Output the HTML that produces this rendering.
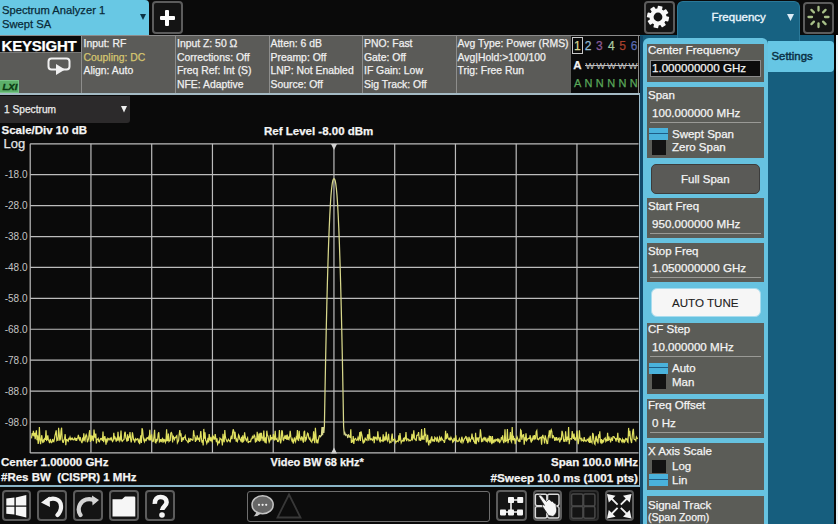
<!DOCTYPE html>
<html><head><meta charset="utf-8">
<style>
*{margin:0;padding:0;box-sizing:border-box}
html,body{width:838px;height:524px;overflow:hidden;background:#0a0a0a}
body{position:relative;font-family:"Liberation Sans",sans-serif;color:#fff;-webkit-text-stroke:0.25px currentColor}
.a{position:absolute;white-space:nowrap}
.btn{position:absolute;background:#141414;border:2px solid #5c5c5c;border-radius:4px}
.ann{font-size:10.4px;color:#f0f0f0;line-height:13.6px}
.sk{position:absolute;left:647px;width:117px;background:#5b5c57}
.skl{position:absolute;left:1px;font-size:11.5px;color:#f4f4f4}
.skv{position:absolute;left:5px;font-size:11.6px;color:#f4f4f4}
.ul{position:absolute;left:3px;right:3px;height:1px;background:#9a9a96}
.tg{position:absolute;left:2px;width:19px}
</style></head><body>

<!-- top tab -->
<div class="a" style="left:0;top:0;width:148.5px;height:35px;background:#68c8e4;border-top-right-radius:4px"></div>
<div class="a" style="left:2px;top:3px;font-size:11.2px;line-height:14.2px;color:#082a38">Spectrum Analyzer 1<br>Swept SA</div>
<svg class="a" style="left:140px;top:14px" width="7" height="7"><path d="M0,0 L6,0 L3,6Z" fill="#0c3344"/></svg>

<!-- plus button -->
<div class="btn" style="left:152px;top:1px;width:31px;height:33px"></div>
<div class="a" style="left:159.5px;top:15.5px;width:15px;height:4px;background:#fff;border-radius:1px"></div>
<div class="a" style="left:165px;top:9.5px;width:4px;height:16px;background:#fff;border-radius:1px"></div>

<!-- gear button -->
<div class="btn" style="left:643.5px;top:1px;width:31px;height:33px"></div>
<svg class="a" style="left:645px;top:3.5px" width="26" height="26" viewBox="-13 -13 26 26">
<g fill="#f8f8f8" transform="rotate(12)">
<circle r="8.4"/>
<rect x="-2.4" y="-11" width="4.8" height="22" rx="0.6"/>
<rect x="-2.4" y="-11" width="4.8" height="22" rx="0.6" transform="rotate(45)"/>
<rect x="-2.4" y="-11" width="4.8" height="22" rx="0.6" transform="rotate(90)"/>
<rect x="-2.4" y="-11" width="4.8" height="22" rx="0.6" transform="rotate(135)"/>
</g>
<circle r="4.4" fill="#121212"/>
</svg>

<!-- right teal panel -->
<div class="a" style="left:640px;top:35px;width:194px;height:489px;background:#165e7e"></div>
<div class="a" style="left:677px;top:1px;width:123px;height:40px;background:#176282;border:1px solid #2a7898;border-bottom:0;border-radius:6px 6px 0 0"></div>
<div class="a" style="left:711.5px;top:11px;font-size:11.5px;color:#e8f4fc;-webkit-text-stroke:0.35px #e8f4fc">Frequency</div>
<svg class="a" style="left:787px;top:14px" width="8" height="8"><path d="M0,0 L7,0 L3.5,7Z" fill="#dcecf6"/></svg>
<div class="a" style="left:834px;top:0;width:2px;height:524px;background:#050505"></div>
<div class="a" style="left:836px;top:35px;width:2px;height:489px;background:#e8f4f8"></div>

<!-- spinner -->
<div class="btn" style="left:803px;top:1.5px;width:30.5px;height:32px"></div>
<svg class="a" style="left:806px;top:4.5px" width="25" height="25" viewBox="-12.5 -12 25 25">
<g stroke="#a8c088" stroke-width="2.3" stroke-linecap="round">
<line x1="0" y1="-6.5" x2="0" y2="-10"/>
<line x1="0" y1="-6.5" x2="0" y2="-10" transform="rotate(45)"/>
<line x1="0" y1="-6.5" x2="0" y2="-10" transform="rotate(90)"/>
<line x1="0" y1="-6.5" x2="0" y2="-10" transform="rotate(135)"/>
<line x1="0" y1="-6.5" x2="0" y2="-10" transform="rotate(180)"/>
<line x1="0" y1="-6.5" x2="0" y2="-10" transform="rotate(225)"/>
<line x1="0" y1="-6.5" x2="0" y2="-10" transform="rotate(270)"/>
<line x1="0" y1="-6.5" x2="0" y2="-10" transform="rotate(315)"/>
</g></svg>

<!-- annotation bar -->
<div class="a" style="left:0;top:35px;width:640px;height:1px;background:#8c8c8c"></div>
<div class="a" style="left:0;top:36px;width:571px;height:57px;background:#5b5b58"></div>
<div class="a" style="left:0;top:36px;width:81px;height:16px;background:#0a0a0a"></div>
<div class="a" style="left:1.5px;top:37px;font-size:15px;font-weight:bold;color:#fff;line-height:17px;letter-spacing:-0.2px">KEYSIGHT</div>
<div class="a" style="left:0;top:52px;width:81px;height:1px;background:#7a7a78"></div>
<svg class="a" style="left:46px;top:56px" width="28" height="20" viewBox="0 0 28 20">
<rect x="2.5" y="2.5" width="21" height="11" rx="3" fill="none" stroke="#f0f0f0" stroke-width="2"/>
<path d="M10,8 L19,13.5 L10,19Z" fill="#f0f0f0"/>
</svg>
<div class="a" style="left:0;top:80px;width:18.5px;height:12.8px;background:#5cb06a;border:1px solid #78c488;border-left:0"></div>
<div class="a" style="left:2.5px;top:80.5px;font-size:9.5px;font-weight:bold;font-style:italic;color:#0a3a12;line-height:12px;-webkit-text-stroke:0.4px #0a3a12">LXI</div>
<div class="a" style="left:81px;top:36px;width:1px;height:57px;background:#8e8e8c"></div>
<div class="a" style="left:175px;top:36px;width:1px;height:57px;background:#8e8e8c"></div>
<div class="a" style="left:269px;top:36px;width:1px;height:57px;background:#8e8e8c"></div>
<div class="a" style="left:362px;top:36px;width:1px;height:57px;background:#8e8e8c"></div>
<div class="a" style="left:456px;top:36px;width:1px;height:57px;background:#8e8e8c"></div>
<div class="a ann" style="left:83.5px;top:37px">Input: RF<br><span style="color:#d6c670">Coupling: DC</span><br>Align: Auto</div>
<div class="a ann" style="left:177px;top:37px">Input Z: 50 &#937;<br>Corrections: Off<br>Freq Ref: Int (S)<br>NFE: Adaptive</div>
<div class="a ann" style="left:270.5px;top:37px">Atten: 6 dB<br>Preamp: Off<br>LNP: Not Enabled<br>Source: Off</div>
<div class="a ann" style="left:364px;top:37px">PNO: Fast<br>Gate: Off<br>IF Gain: Low<br>Sig Track: Off</div>
<div class="a ann" style="left:457.5px;top:37px">Avg Type: Power (RMS)<br>Avg|Hold:&gt;100/100<br>Trig: Free Run</div>
<!-- trace indicator box -->
<div class="a" style="left:571px;top:36px;width:68px;height:57px;background:#0a0a0a;border-right:1px solid #8a8a8a"></div>
<div class="a" style="left:572px;top:37px;width:11px;height:17px;border:1px solid #c8c8c8"></div>
<div class="a" style="left:571.4px;top:38.5px;width:12px;text-align:center;font-size:12px;line-height:15px;color:#dcd890">1</div>
<div class="a" style="left:582.0px;top:38.5px;width:12px;text-align:center;font-size:12px;line-height:15px;color:#94bcd4">2</div>
<div class="a" style="left:593.4px;top:38.5px;width:12px;text-align:center;font-size:12px;line-height:15px;color:#8a5a98">3</div>
<div class="a" style="left:605.4px;top:38.5px;width:12px;text-align:center;font-size:12px;line-height:15px;color:#aacca4">4</div>
<div class="a" style="left:616.7px;top:38.5px;width:12px;text-align:center;font-size:12px;line-height:15px;color:#a8402c">5</div>
<div class="a" style="left:628.1px;top:38.5px;width:12px;text-align:center;font-size:12px;line-height:15px;color:#5a6ab0">6</div>
<div class="a" style="left:569.5px;top:58px;width:16px;text-align:center;font-size:11.5px;font-weight:bold;line-height:15px;color:#f0f0f0">A</div>
<div class="a" style="left:584.0px;top:58.5px;width:12px;text-align:center;font-size:9.5px;line-height:14px;color:#c4c4c4;-webkit-text-stroke:0">W</div>
<div class="a" style="left:594.8px;top:58.5px;width:12px;text-align:center;font-size:9.5px;line-height:14px;color:#c4c4c4;-webkit-text-stroke:0">W</div>
<div class="a" style="left:605.5px;top:58.5px;width:12px;text-align:center;font-size:9.5px;line-height:14px;color:#c4c4c4;-webkit-text-stroke:0">W</div>
<div class="a" style="left:616.2px;top:58.5px;width:12px;text-align:center;font-size:9.5px;line-height:14px;color:#c4c4c4;-webkit-text-stroke:0">W</div>
<div class="a" style="left:627.0px;top:58.5px;width:12px;text-align:center;font-size:9.5px;line-height:14px;color:#c4c4c4;-webkit-text-stroke:0">W</div>
<div class="a" style="left:585px;top:64.5px;width:53px;height:1px;background:#c0c0c0"></div>
<div class="a" style="left:571.7px;top:76px;width:12px;text-align:center;font-size:11px;line-height:15px;color:#5aa85a">A</div>
<div class="a" style="left:582.4px;top:76px;width:12px;text-align:center;font-size:11px;line-height:15px;color:#5aa85a">N</div>
<div class="a" style="left:593.8px;top:76px;width:12px;text-align:center;font-size:11px;line-height:15px;color:#5aa85a">N</div>
<div class="a" style="left:605.2px;top:76px;width:12px;text-align:center;font-size:11px;line-height:15px;color:#5aa85a">N</div>
<div class="a" style="left:616.5px;top:76px;width:12px;text-align:center;font-size:11px;line-height:15px;color:#5aa85a">N</div>
<div class="a" style="left:627.8px;top:76px;width:12px;text-align:center;font-size:11px;line-height:15px;color:#5aa85a">N</div>
<div class="a" style="left:0;top:93px;width:640px;height:2px;background:#a4bac4"></div>

<!-- spectrum dropdown -->
<div class="a" style="left:0;top:96px;width:129.5px;height:26.5px;background:#2c2a2b;border-bottom-right-radius:3px"></div>
<div class="a" style="left:4px;top:103.5px;font-size:10.2px;color:#ececec">1 Spectrum</div>
<svg class="a" style="left:121px;top:106px" width="7" height="8"><path d="M0,0 L6,0 L3,6.5Z" fill="#f0f0f0"/></svg>

<div class="a" style="left:1.5px;top:124.2px;font-size:11.5px;font-weight:bold;color:#f4f4f4">Scale/Div 10 dB</div>
<div class="a" style="left:3.5px;top:136px;font-size:13px;color:#e4e4e4">Log</div>
<div class="a" style="left:264px;top:124.7px;font-size:11.5px;font-weight:bold;color:#f4f4f4">Ref Level -8.00 dBm</div>

<!-- grid -->
<svg class="a" style="left:0;top:0" width="838" height="524">
<g stroke="#bcbcbc" stroke-width="1.2" fill="none">
<path d="M30.20,143.8 V452.9 M90.95,143.8 V452.9 M151.70,143.8 V452.9 M212.45,143.8 V452.9 M273.20,143.8 V452.9 M333.95,143.8 V452.9 M394.70,143.8 V452.9 M455.45,143.8 V452.9 M516.20,143.8 V452.9 M576.95,143.8 V452.9"/>
<path d="M30.2,143.80 H638.5 M30.2,174.71 H638.5 M30.2,205.62 H638.5 M30.2,236.53 H638.5 M30.2,267.44 H638.5 M30.2,298.35 H638.5 M30.2,329.26 H638.5 M30.2,360.17 H638.5 M30.2,391.08 H638.5 M30.2,421.99 H638.5 M30.2,452.90 H638.5"/></g>
<path d="M331,144 L337,144 L334,150Z" fill="#d0d0d0"/>
<path d="M331,453.4 L337,453.4 L334,447.4Z" fill="#d0d0d0"/>
<path d="M31.0,437.6 L31.6,437.7 L32.2,433.0 L32.8,435.5 L33.4,430.7 L34.0,436.5 L34.6,432.8 L35.2,439.3 L35.8,433.6 L36.4,430.4 L37.0,440.1 L37.6,435.4 L38.2,444.0 L38.8,439.6 L39.4,427.0 L40.0,439.3 L40.6,444.1 L41.2,439.1 L41.8,435.2 L42.4,441.0 L43.0,443.0 L43.6,440.1 L44.2,441.0 L44.8,437.9 L45.4,439.8 L46.0,430.3 L46.6,440.2 L47.2,439.7 L47.8,435.3 L48.4,439.9 L49.0,441.1 L49.6,443.2 L50.2,439.0 L50.8,441.6 L51.4,442.6 L52.0,442.1 L52.6,439.0 L53.2,441.1 L53.8,441.6 L54.4,439.1 L55.0,435.7 L55.6,433.1 L56.2,430.3 L56.8,440.0 L57.4,438.8 L58.0,440.8 L58.6,427.7 L59.2,433.6 L59.8,440.6 L60.4,439.1 L61.0,431.1 L61.6,427.7 L62.2,439.4 L62.8,442.1 L63.4,442.2 L64.0,439.7 L64.6,438.4 L65.2,434.2 L65.8,445.1 L66.4,439.6 L67.0,439.5 L67.6,440.7 L68.2,441.3 L68.8,438.6 L69.4,439.0 L70.0,437.2 L70.6,439.5 L71.2,438.4 L71.8,439.4 L72.4,438.4 L73.0,439.7 L73.6,439.9 L74.2,438.9 L74.8,438.0 L75.4,440.5 L76.0,438.2 L76.6,440.9 L77.2,438.4 L77.8,437.9 L78.4,434.9 L79.0,438.8 L79.6,439.8 L80.2,437.0 L80.8,440.4 L81.4,441.6 L82.0,443.1 L82.6,437.5 L83.2,441.3 L83.8,433.4 L84.4,439.5 L85.0,440.6 L85.6,436.2 L86.2,434.6 L86.8,436.1 L87.4,442.2 L88.0,440.5 L88.6,438.8 L89.2,433.0 L89.8,430.0 L90.4,442.0 L91.0,435.3 L91.6,440.6 L92.2,435.6 L92.8,437.5 L93.4,441.1 L94.0,429.6 L94.6,435.4 L95.2,438.0 L95.8,433.6 L96.4,443.4 L97.0,439.2 L97.6,439.3 L98.2,438.5 L98.8,441.5 L99.4,441.9 L100.0,439.7 L100.6,438.7 L101.2,439.1 L101.8,438.5 L102.4,440.9 L103.0,431.5 L103.6,442.2 L104.2,439.1 L104.8,436.1 L105.4,439.3 L106.0,444.6 L106.6,439.9 L107.2,441.2 L107.8,438.2 L108.4,438.6 L109.0,440.0 L109.6,439.0 L110.2,438.2 L110.8,439.6 L111.4,438.2 L112.0,440.4 L112.6,441.5 L113.2,440.3 L113.8,432.7 L114.4,438.4 L115.0,437.2 L115.6,438.6 L116.2,441.7 L116.8,439.0 L117.4,440.6 L118.0,431.9 L118.6,439.3 L119.2,438.0 L119.8,440.9 L120.4,439.4 L121.0,430.5 L121.6,440.0 L122.2,441.3 L122.8,440.6 L123.4,439.8 L124.0,439.6 L124.6,433.4 L125.2,431.8 L125.8,437.7 L126.4,439.1 L127.0,441.6 L127.6,434.2 L128.2,440.9 L128.8,436.8 L129.4,437.1 L130.0,432.0 L130.6,438.9 L131.2,442.5 L131.8,439.5 L132.4,432.4 L133.0,435.6 L133.6,439.8 L134.2,439.8 L134.8,442.5 L135.4,438.9 L136.0,439.9 L136.6,439.9 L137.2,438.7 L137.8,438.6 L138.4,441.5 L139.0,440.3 L139.6,444.1 L140.2,440.1 L140.8,435.3 L141.4,442.9 L142.0,428.3 L142.6,430.1 L143.2,436.8 L143.8,440.2 L144.4,441.8 L145.0,439.2 L145.6,440.7 L146.2,440.7 L146.8,438.0 L147.4,437.8 L148.0,438.6 L148.6,437.1 L149.2,440.3 L149.8,429.9 L150.4,440.4 L151.0,438.5 L151.6,434.3 L152.2,441.0 L152.8,441.6 L153.4,440.9 L154.0,436.0 L154.6,429.8 L155.2,442.3 L155.8,442.8 L156.4,438.8 L157.0,440.9 L157.6,439.7 L158.2,433.9 L158.8,432.3 L159.4,441.8 L160.0,441.0 L160.6,439.1 L161.2,442.1 L161.8,439.8 L162.4,438.8 L163.0,442.7 L163.6,438.9 L164.2,440.7 L164.8,440.0 L165.4,442.4 L166.0,440.7 L166.6,429.3 L167.2,440.7 L167.8,440.6 L168.4,433.6 L169.0,441.4 L169.6,440.6 L170.2,440.5 L170.8,433.1 L171.4,432.5 L172.0,434.1 L172.6,442.4 L173.2,435.6 L173.8,437.8 L174.4,439.4 L175.0,437.7 L175.6,437.7 L176.2,436.4 L176.8,435.7 L177.4,442.9 L178.0,441.8 L178.6,440.6 L179.2,434.2 L179.8,430.1 L180.4,434.7 L181.0,433.2 L181.6,441.9 L182.2,440.0 L182.8,437.5 L183.4,440.2 L184.0,437.4 L184.6,437.2 L185.2,435.9 L185.8,439.6 L186.4,440.1 L187.0,440.8 L187.6,441.4 L188.2,443.1 L188.8,437.9 L189.4,441.3 L190.0,441.4 L190.6,438.9 L191.2,439.1 L191.8,439.8 L192.4,440.3 L193.0,439.9 L193.6,430.4 L194.2,435.5 L194.8,436.0 L195.4,441.9 L196.0,438.9 L196.6,440.5 L197.2,435.3 L197.8,439.2 L198.4,439.5 L199.0,437.6 L199.6,441.8 L200.2,436.3 L200.8,431.1 L201.4,437.9 L202.0,442.6 L202.6,440.1 L203.2,445.5 L203.8,428.9 L204.4,438.6 L205.0,432.4 L205.6,440.3 L206.2,441.1 L206.8,443.4 L207.4,441.8 L208.0,437.9 L208.6,442.4 L209.2,434.0 L209.8,439.8 L210.4,440.4 L211.0,436.9 L211.6,440.5 L212.2,441.8 L212.8,435.8 L213.4,436.5 L214.0,439.2 L214.6,439.0 L215.2,434.1 L215.8,438.4 L216.4,442.1 L217.0,438.4 L217.6,444.3 L218.2,443.0 L218.8,441.5 L219.4,442.4 L220.0,438.2 L220.6,439.0 L221.2,439.1 L221.8,440.4 L222.4,445.4 L223.0,433.8 L223.6,440.0 L224.2,442.3 L224.8,430.0 L225.4,437.0 L226.0,439.0 L226.6,440.4 L227.2,441.7 L227.8,441.0 L228.4,439.3 L229.0,440.1 L229.6,440.7 L230.2,442.3 L230.8,437.8 L231.4,435.7 L232.0,439.2 L232.6,432.6 L233.2,429.3 L233.8,431.2 L234.4,439.2 L235.0,431.9 L235.6,437.0 L236.2,441.7 L236.8,439.5 L237.4,441.3 L238.0,439.4 L238.6,434.8 L239.2,435.9 L239.8,439.3 L240.4,439.4 L241.0,441.5 L241.6,436.7 L242.2,442.7 L242.8,435.4 L243.4,441.2 L244.0,440.5 L244.6,432.4 L245.2,437.0 L245.8,439.3 L246.4,440.7 L247.0,439.1 L247.6,437.9 L248.2,443.0 L248.8,441.5 L249.4,441.7 L250.0,441.5 L250.6,441.7 L251.2,439.0 L251.8,438.8 L252.4,436.7 L253.0,438.0 L253.6,437.0 L254.2,435.1 L254.8,436.1 L255.4,442.5 L256.0,439.8 L256.6,441.6 L257.2,431.9 L257.8,439.8 L258.4,440.3 L259.0,433.5 L259.6,441.6 L260.2,432.7 L260.8,440.8 L261.4,432.9 L262.0,437.8 L262.6,437.5 L263.2,441.1 L263.8,430.5 L264.4,439.6 L265.0,442.6 L265.6,437.3 L266.2,443.4 L266.8,430.7 L267.4,435.3 L268.0,436.1 L268.6,439.7 L269.2,442.2 L269.8,440.9 L270.4,434.8 L271.0,440.2 L271.6,437.5 L272.2,437.7 L272.8,439.3 L273.4,434.0 L274.0,439.8 L274.6,440.0 L275.2,430.9 L275.8,439.2 L276.4,439.5 L277.0,438.6 L277.6,441.4 L278.2,441.5 L278.8,439.7 L279.4,430.0 L280.0,439.1 L280.6,443.4 L281.2,440.2 L281.8,430.3 L282.4,431.6 L283.0,439.8 L283.6,440.3 L284.2,437.4 L284.8,436.2 L285.4,438.9 L286.0,435.4 L286.6,439.6 L287.2,434.6 L287.8,439.8 L288.4,437.6 L289.0,439.2 L289.6,436.6 L290.2,430.8 L290.8,436.4 L291.4,439.4 L292.0,440.9 L292.6,439.4 L293.2,443.5 L293.8,441.3 L294.4,437.5 L295.0,440.0 L295.6,441.6 L296.2,437.6 L296.8,439.2 L297.4,430.1 L298.0,439.9 L298.6,440.4 L299.2,430.8 L299.8,437.9 L300.4,438.2 L301.0,440.6 L301.6,436.9 L302.2,437.2 L302.8,440.7 L303.4,442.6 L304.0,432.2 L304.6,430.8 L305.2,441.7 L305.8,437.1 L306.4,438.7 L307.0,435.5 L307.6,433.2 L308.2,433.8 L308.8,438.0 L309.4,439.2 L310.0,438.0 L310.6,441.0 L311.2,441.2 L311.8,442.1 L312.4,438.5 L313.0,440.8 L313.6,431.2 L314.2,437.4 L314.8,443.3 L315.4,427.7 L316.0,436.1 L316.6,441.7 L317.2,440.6 L317.8,443.5 L318.4,439.5 L319.0,437.0 L319.6,435.2 M348.4,434.4 L349.0,436.5 L349.6,436.2 L350.2,437.7 L350.8,429.3 L351.4,443.0 L352.0,440.0 L352.6,442.4 L353.2,436.0 L353.8,443.9 L354.4,439.4 L355.0,438.9 L355.6,438.4 L356.2,440.0 L356.8,440.3 L357.4,439.9 L358.0,437.6 L358.6,439.8 L359.2,438.1 L359.8,432.1 L360.4,441.0 L361.0,431.3 L361.6,433.9 L362.2,436.7 L362.8,441.4 L363.4,443.5 L364.0,440.6 L364.6,441.4 L365.2,437.6 L365.8,439.7 L366.4,439.7 L367.0,440.2 L367.6,434.8 L368.2,434.8 L368.8,440.7 L369.4,429.1 L370.0,438.0 L370.6,439.5 L371.2,438.7 L371.8,439.6 L372.4,440.3 L373.0,438.6 L373.6,436.3 L374.2,443.1 L374.8,436.8 L375.4,438.4 L376.0,437.5 L376.6,438.8 L377.2,440.5 L377.8,431.3 L378.4,436.9 L379.0,439.4 L379.6,440.7 L380.2,436.8 L380.8,441.3 L381.4,440.2 L382.0,440.1 L382.6,440.9 L383.2,434.3 L383.8,440.7 L384.4,440.0 L385.0,436.4 L385.6,440.5 L386.2,431.7 L386.8,438.4 L387.4,440.6 L388.0,438.7 L388.6,433.9 L389.2,441.1 L389.8,442.7 L390.4,441.8 L391.0,442.2 L391.6,437.3 L392.2,433.6 L392.8,441.7 L393.4,439.6 L394.0,439.6 L394.6,438.9 L395.2,440.4 L395.8,442.7 L396.4,441.3 L397.0,441.4 L397.6,440.9 L398.2,441.5 L398.8,435.3 L399.4,440.8 L400.0,433.0 L400.6,438.6 L401.2,442.7 L401.8,441.3 L402.4,440.5 L403.0,441.0 L403.6,437.9 L404.2,441.5 L404.8,437.9 L405.4,438.5 L406.0,432.1 L406.6,441.2 L407.2,438.8 L407.8,439.0 L408.4,439.3 L409.0,440.9 L409.6,440.2 L410.2,440.8 L410.8,440.3 L411.4,439.7 L412.0,433.9 L412.6,439.2 L413.2,437.8 L413.8,430.4 L414.4,437.4 L415.0,439.3 L415.6,439.3 L416.2,441.0 L416.8,435.3 L417.4,435.3 L418.0,434.7 L418.6,432.1 L419.2,440.4 L419.8,438.7 L420.4,440.9 L421.0,438.3 L421.6,429.0 L422.2,439.2 L422.8,438.7 L423.4,435.7 L424.0,439.9 L424.6,428.1 L425.2,435.3 L425.8,434.8 L426.4,442.4 L427.0,440.3 L427.6,434.7 L428.2,442.1 L428.8,445.4 L429.4,440.9 L430.0,440.4 L430.6,443.3 L431.2,438.2 L431.8,436.4 L432.4,441.4 L433.0,439.7 L433.6,440.0 L434.2,441.9 L434.8,437.4 L435.4,438.2 L436.0,439.3 L436.6,441.5 L437.2,436.7 L437.8,440.0 L438.4,441.9 L439.0,441.7 L439.6,437.2 L440.2,438.6 L440.8,441.1 L441.4,437.4 L442.0,438.4 L442.6,440.0 L443.2,440.2 L443.8,440.8 L444.4,442.8 L445.0,439.8 L445.6,430.9 L446.2,439.1 L446.8,436.9 L447.4,433.4 L448.0,437.8 L448.6,439.1 L449.2,439.7 L449.8,437.6 L450.4,440.4 L451.0,437.5 L451.6,439.0 L452.2,439.6 L452.8,442.2 L453.4,441.5 L454.0,437.8 L454.6,440.4 L455.2,439.8 L455.8,435.4 L456.4,440.3 L457.0,441.6 L457.6,440.9 L458.2,441.4 L458.8,440.2 L459.4,438.6 L460.0,440.5 L460.6,441.8 L461.2,442.4 L461.8,436.7 L462.4,439.2 L463.0,442.3 L463.6,440.7 L464.2,439.2 L464.8,438.2 L465.4,437.8 L466.0,436.0 L466.6,439.6 L467.2,438.6 L467.8,443.1 L468.4,441.3 L469.0,436.8 L469.6,439.5 L470.2,442.0 L470.8,439.2 L471.4,438.6 L472.0,433.6 L472.6,438.6 L473.2,438.0 L473.8,441.4 L474.4,441.8 L475.0,443.5 L475.6,432.7 L476.2,444.1 L476.8,437.5 L477.4,440.3 L478.0,437.6 L478.6,442.1 L479.2,437.6 L479.8,437.1 L480.4,429.4 L481.0,434.5 L481.6,442.1 L482.2,439.7 L482.8,441.7 L483.4,438.7 L484.0,437.7 L484.6,439.3 L485.2,437.4 L485.8,441.0 L486.4,441.4 L487.0,439.1 L487.6,441.2 L488.2,439.0 L488.8,440.1 L489.4,435.7 L490.0,442.8 L490.6,436.1 L491.2,438.9 L491.8,444.1 L492.4,436.1 L493.0,443.2 L493.6,439.8 L494.2,441.7 L494.8,440.1 L495.4,441.0 L496.0,439.4 L496.6,439.7 L497.2,440.8 L497.8,438.3 L498.4,440.5 L499.0,438.8 L499.6,443.2 L500.2,441.2 L500.8,440.9 L501.4,437.0 L502.0,439.6 L502.6,435.3 L503.2,440.8 L503.8,443.0 L504.4,440.2 L505.0,429.3 L505.6,442.1 L506.2,440.8 L506.8,440.4 L507.4,429.1 L508.0,443.1 L508.6,439.7 L509.2,439.4 L509.8,438.9 L510.4,432.1 L511.0,440.9 L511.6,442.0 L512.2,427.0 L512.8,440.2 L513.4,435.9 L514.0,440.5 L514.6,438.0 L515.2,444.1 L515.8,439.9 L516.4,439.2 L517.0,436.8 L517.6,438.4 L518.2,440.7 L518.8,441.3 L519.4,439.8 L520.0,442.0 L520.6,430.0 L521.2,430.8 L521.8,439.8 L522.4,436.7 L523.0,434.9 L523.6,434.6 L524.2,444.7 L524.8,438.5 L525.4,439.4 L526.0,433.4 L526.6,440.6 L527.2,439.7 L527.8,438.8 L528.4,438.6 L529.0,438.2 L529.6,438.5 L530.2,435.2 L530.8,440.8 L531.4,442.5 L532.0,438.8 L532.6,439.7 L533.2,435.6 L533.8,439.3 L534.4,435.2 L535.0,439.1 L535.6,438.3 L536.2,431.7 L536.8,430.6 L537.4,439.0 L538.0,438.7 L538.6,439.7 L539.2,438.9 L539.8,437.6 L540.4,437.8 L541.0,437.3 L541.6,444.8 L542.2,437.3 L542.8,435.0 L543.4,437.6 L544.0,438.7 L544.6,443.5 L545.2,435.3 L545.8,438.1 L546.4,440.3 L547.0,443.6 L547.6,443.5 L548.2,437.5 L548.8,435.2 L549.4,430.3 L550.0,438.2 L550.6,431.1 L551.2,429.7 L551.8,431.7 L552.4,438.5 L553.0,435.1 L553.6,437.0 L554.2,437.6 L554.8,441.0 L555.4,437.4 L556.0,439.2 L556.6,437.1 L557.2,440.0 L557.8,439.7 L558.4,438.7 L559.0,438.1 L559.6,442.4 L560.2,440.7 L560.8,438.4 L561.4,439.1 L562.0,430.8 L562.6,433.1 L563.2,436.8 L563.8,441.6 L564.4,439.3 L565.0,441.8 L565.6,431.4 L566.2,439.0 L566.8,441.7 L567.4,436.6 L568.0,440.0 L568.6,427.0 L569.2,444.2 L569.8,439.3 L570.4,438.6 L571.0,438.8 L571.6,439.2 L572.2,431.0 L572.8,436.4 L573.4,438.9 L574.0,433.6 L574.6,439.2 L575.2,438.4 L575.8,440.6 L576.4,437.5 L577.0,430.5 L577.6,439.2 L578.2,444.2 L578.8,440.2 L579.4,430.3 L580.0,438.1 L580.6,438.4 L581.2,440.3 L581.8,438.7 L582.4,440.3 L583.0,440.6 L583.6,441.2 L584.2,437.0 L584.8,440.5 L585.4,440.4 L586.0,441.4 L586.6,440.9 L587.2,439.3 L587.8,439.5 L588.4,440.8 L589.0,437.5 L589.6,442.9 L590.2,435.9 L590.8,441.9 L591.4,441.5 L592.0,442.6 L592.6,433.5 L593.2,433.9 L593.8,439.9 L594.4,443.4 L595.0,444.3 L595.6,438.4 L596.2,435.9 L596.8,440.7 L597.4,439.8 L598.0,443.4 L598.6,434.3 L599.2,438.0 L599.8,431.4 L600.4,441.9 L601.0,442.9 L601.6,439.1 L602.2,443.5 L602.8,440.0 L603.4,442.4 L604.0,439.1 L604.6,438.8 L605.2,438.0 L605.8,441.3 L606.4,439.9 L607.0,441.2 L607.6,432.7 L608.2,440.8 L608.8,436.5 L609.4,439.2 L610.0,439.3 L610.6,442.3 L611.2,437.8 L611.8,438.3 L612.4,440.9 L613.0,436.7 L613.6,436.7 L614.2,436.9 L614.8,438.3 L615.4,438.4 L616.0,441.5 L616.6,438.7 L617.2,439.0 L617.8,432.8 L618.4,441.7 L619.0,442.2 L619.6,438.4 L620.2,438.8 L620.8,439.6 L621.4,440.7 L622.0,442.0 L622.6,439.3 L623.2,441.3 L623.8,439.3 L624.4,442.2 L625.0,441.4 L625.6,438.7 L626.2,439.3 L626.8,438.7 L627.4,441.8 L628.0,442.4 L628.6,427.9 L629.2,436.3 L629.8,430.7 L630.4,438.1 L631.0,440.8 L631.6,443.0 L632.2,436.5 L632.8,431.0 L633.4,428.8 L634.0,438.9 L634.6,439.6 L635.2,439.4 L635.8,440.6 L636.4,436.9 L637.0,437.9 L637.6,439.0" fill="none" stroke="#e0e060" stroke-width="1.2"/>
<path d="M319.6,435.2 L320.2,436.8 L320.8,436.1 L321.4,435.6 L322.0,427.0 L322.6,435.1 L323.2,427.0 L323.8,433.0 L324.4,426.1 L325.0,391.8 L325.6,360.3 L326.2,331.7 L326.8,305.8 L327.4,282.6 L328.0,262.0 L328.6,244.0 L329.2,228.4 L329.8,215.2 L330.4,204.2 L331.0,195.4 L331.6,188.7 L332.2,183.8 L332.8,180.7 L333.4,179.1 L334.0,178.7 L334.6,179.1 L335.2,180.7 L335.8,183.8 L336.4,188.7 L337.0,195.4 L337.6,204.2 L338.2,215.2 L338.8,228.4 L339.4,244.0 L340.0,262.0 L340.6,282.6 L341.2,305.8 L341.8,331.7 L342.4,360.3 L343.0,391.8 L343.6,426.1 L344.2,433.7 L344.8,432.8 L345.4,435.1 L346.0,434.4 L346.6,435.1 L347.2,435.6 L347.8,438.0 L348.4,434.4" fill="none" stroke="#d8d88c" stroke-width="1.25"/>
</svg>
<div class="a" style="left:0;top:168px;width:27.5px;font-size:10px;line-height:14px;color:#c4c4c4;text-align:right;-webkit-text-stroke:0">-18.0</div>
<div class="a" style="left:0;top:199px;width:27.5px;font-size:10px;line-height:14px;color:#c4c4c4;text-align:right;-webkit-text-stroke:0">-28.0</div>
<div class="a" style="left:0;top:230px;width:27.5px;font-size:10px;line-height:14px;color:#c4c4c4;text-align:right;-webkit-text-stroke:0">-38.0</div>
<div class="a" style="left:0;top:261px;width:27.5px;font-size:10px;line-height:14px;color:#c4c4c4;text-align:right;-webkit-text-stroke:0">-48.0</div>
<div class="a" style="left:0;top:292px;width:27.5px;font-size:10px;line-height:14px;color:#c4c4c4;text-align:right;-webkit-text-stroke:0">-58.0</div>
<div class="a" style="left:0;top:322.6px;width:27.5px;font-size:10px;line-height:14px;color:#c4c4c4;text-align:right;-webkit-text-stroke:0">-68.0</div>
<div class="a" style="left:0;top:353.6px;width:27.5px;font-size:10px;line-height:14px;color:#c4c4c4;text-align:right;-webkit-text-stroke:0">-78.0</div>
<div class="a" style="left:0;top:384.5px;width:27.5px;font-size:10px;line-height:14px;color:#c4c4c4;text-align:right;-webkit-text-stroke:0">-88.0</div>
<div class="a" style="left:0;top:415.5px;width:27.5px;font-size:10px;line-height:14px;color:#c4c4c4;text-align:right;-webkit-text-stroke:0">-98.0</div>

<!-- bottom text -->
<div class="a" style="left:1px;top:455px;font-size:11.5px;font-weight:bold;color:#f4f4f4;line-height:15.2px">Center 1.00000 GHz<br>#Res BW&nbsp; (CISPR) 1 MHz</div>
<div class="a" style="left:270.5px;top:455.5px;font-size:11px;font-weight:bold;color:#f4f4f4">Video BW 68 kHz*</div>
<div class="a" style="left:400px;width:238px;top:455px;font-size:11.5px;font-weight:bold;color:#f4f4f4;line-height:15.2px;text-align:right">Span 100.0 MHz<br><span style="font-size:11.7px">#Sweep 10.0 ms (1001 pts)</span></div>
<div class="a" style="left:0;top:485px;width:640px;height:2px;background:#8ab4c6"></div>
<div class="a" style="left:638.5px;top:93px;width:1.5px;height:394px;background:#9cbccc"></div>

<!-- bottom toolbar -->
<div class="btn" style="left:1.5px;top:490px;width:29.5px;height:31px"></div>
<svg class="a" style="left:0;top:486px" width="36" height="38" viewBox="0 0 36 38">
<path d="M6.3,12.6 L14.4,11.6 L14.4,19.4 L6.3,19.4Z M15.8,11.4 L26.3,9 L26.3,19.4 L15.8,19.4Z M6.3,20.8 L14.4,20.8 L14.4,28.6 L6.3,27.8Z M15.8,20.8 L26.3,20.8 L26.3,31.6 L15.8,29Z" fill="#f6f6f6"/>
</svg>
<div class="btn" style="left:37px;top:490px;width:30px;height:31px"></div>
<svg class="a" style="left:36px;top:486px" width="32" height="38" viewBox="0 0 32 38">
<path d="M10,15.5 C16,10.5 24.5,12.5 25,20 C25.3,24 23.5,27 21.5,29" fill="none" stroke="#f2f2f2" stroke-width="4.2" stroke-linecap="round"/>
<path d="M5,16.5 L13.5,10.5 L14,21Z" fill="#f2f2f2"/>
</svg>
<div class="btn" style="left:73px;top:490px;width:30px;height:31px"></div>
<svg class="a" style="left:72px;top:486px" width="32" height="38" viewBox="0 0 32 38">
<path d="M8.5,29 C6.5,26 6.2,22 8,18.5 C10.5,13.5 17,11.5 22.5,14.5" fill="none" stroke="#d4d4d4" stroke-width="4.2" stroke-linecap="round"/>
<path d="M20,9.5 L27,14 L20.5,19.5Z" fill="#d4d4d4"/>
</svg>
<div class="btn" style="left:109px;top:490px;width:30px;height:31px"></div>
<svg class="a" style="left:108px;top:486px" width="32" height="38" viewBox="0 0 32 38">
<path d="M4.5,13.2 L14,13.2 L17,10.4 L26,10.4 Q27.3,10.4 27.3,11.7 L27.3,30.5 L4.5,30.5Z" fill="#f6f6f6"/>
</svg>
<div class="btn" style="left:145px;top:490px;width:30px;height:31px"></div>
<svg class="a" style="left:144px;top:486px" width="32" height="38" viewBox="0 0 32 38">
<path d="M10.8,17.8 C10.6,13 13.2,11 16.6,11 C20.4,11 22.6,13.3 22.6,16.3 C22.6,20 18.2,20.6 18.2,24" fill="none" stroke="#f6f6f6" stroke-width="4.6"/>
<circle cx="18" cy="29" r="2.8" fill="#f6f6f6"/>
</svg>

<div class="btn" style="left:247px;top:490.5px;width:243px;height:31px;background:#0c0c0c;border:1.5px solid #6e6e6e;border-radius:3px"></div>
<svg class="a" style="left:248px;top:492px" width="60" height="28" viewBox="0 0 60 28">
<ellipse cx="14.6" cy="12.8" rx="10.6" ry="9" fill="#666" stroke="#c4c4c4" stroke-width="1.5"/>
<path d="M8.5,19.5 Q7.5,23.5 5.5,24.3 Q10,24.5 13,21.5Z" fill="#c4c4c4"/>
<circle cx="11" cy="12.8" r="1.1" fill="#eee"/><circle cx="14.6" cy="12.8" r="1.1" fill="#eee"/><circle cx="18.2" cy="12.8" r="1.1" fill="#eee"/>
<path d="M41,2.5 L52.5,25.5 L29.5,25.5Z" fill="none" stroke="#383838" stroke-width="1.8"/>
</svg>

<div class="btn" style="left:496px;top:490px;width:30.5px;height:31px"></div>
<svg class="a" style="left:490px;top:486px" width="40" height="38" viewBox="0 0 40 38">
<g stroke="#f0f0f0" stroke-width="1.6" fill="none"><path d="M21,14 H30 M21,14 V26 M13,26 H30"/></g>
<g fill="#f6f6f6"><rect x="18" y="11" width="6" height="6" rx="0.8"/><rect x="27.2" y="11" width="6" height="6" rx="0.8"/>
<rect x="10" y="23.4" width="6" height="6" rx="0.8"/><rect x="18" y="23.4" width="6" height="6" rx="0.8"/><rect x="27" y="23.4" width="6" height="6" rx="0.8"/></g>
</svg>
<div class="btn" style="left:532.5px;top:490px;width:29.5px;height:31px"></div>
<svg class="a" style="left:530px;top:486px" width="34" height="38" viewBox="0 0 34 38">
<g fill="none" stroke="#d8d8d8" stroke-width="1.4"><rect x="5.4" y="8.2" width="11.4" height="11.4" rx="1.5"/><rect x="17.6" y="8.2" width="11.4" height="11.4" rx="1.5"/><rect x="5.4" y="20.6" width="11.4" height="11.4" rx="1.5"/><rect x="17.6" y="20.6" width="11.4" height="11.4" rx="1.5"/></g>
<path d="M8.5,10 C9.5,8.6 11,9 12,10.2 L16.5,15.5 L18,13.8 C19,13.2 20,13.6 20.5,14.5 L21.2,15.4 C22.2,15 23,15.4 23.4,16.2 L24,17.2 C25,17 25.8,17.6 26,18.6 L26.6,23.5 C26.8,25.5 26.2,26.8 25.5,28 L23,30.5 L18.5,29.5 L12.5,20.5 C12,19.6 12.6,18.6 13.6,18.8 L14.5,19.4 Z" fill="#f6f6f6" stroke="#1a1a1a" stroke-width="0.7"/>
</svg>
<div class="btn" style="left:568.5px;top:490px;width:30.5px;height:31px;border-color:#2e2e2e"></div>
<svg class="a" style="left:566px;top:486px" width="34" height="38" viewBox="0 0 34 38">
<g fill="none" stroke="#484848" stroke-width="1.5"><rect x="5.6" y="8" width="11.3" height="12" rx="1.5"/><rect x="17.6" y="8" width="11.3" height="12" rx="1.5"/><rect x="5.6" y="20.6" width="11.3" height="11.6" rx="1.5"/><rect x="17.6" y="20.6" width="11.3" height="11.6" rx="1.5"/></g>
</svg>
<div class="btn" style="left:604.5px;top:490px;width:29.5px;height:31px"></div>
<svg class="a" style="left:600px;top:486px" width="38" height="38" viewBox="0 0 38 38">
<g stroke="#f0f0f0" stroke-width="1.8"><path d="M10,11 L17.6,18.6 M28.5,11 L20.8,18.6 M10,29.5 L17.6,21.8 M28.5,29.5 L20.8,21.8"/></g>
<g fill="#f4f4f4"><path d="M7,8 L15.5,9.8 L8.8,16.5Z"/><path d="M31.5,8 L23,9.8 L29.7,16.5Z"/><path d="M7,32.6 L15.5,30.8 L8.8,24.1Z"/><path d="M31.5,32.6 L23,30.8 L29.7,24.1Z"/></g>
</svg>

<!-- softkey panel -->
<div class="a" style="left:640px;top:36px;width:3px;height:488px;background:#124a6c"></div>
<div class="a" style="left:643px;top:37.5px;width:125px;height:487px;background:#66c2e0;border-radius:6px 6px 0 0"></div>
<div class="a" style="left:768px;top:41px;width:66px;height:30.5px;background:#66c6e4;border-radius:0 4px 4px 0"></div>
<div class="a" style="left:771.5px;top:49.8px;font-size:11.4px;color:#0a3044;-webkit-text-stroke:0.45px #0a3044">Settings</div>

<div class="sk" style="top:43.5px;height:38.5px">
 <div class="skl" style="top:0.5px">Center Frequency</div>
 <div class="a" style="left:3px;top:16.5px;width:111px;height:16.5px;background:#0c0c0c;border:1px solid #8a8a8a"></div>
 <div class="skv" style="top:17.5px;left:5px">1.000000000 GHz</div>
</div>
<div class="sk" style="top:87px;height:71px">
 <div class="skl" style="top:2px">Span</div>
 <div class="skv" style="top:19px">100.000000 MHz</div>
 <div class="ul" style="top:35px"></div>
 <div class="tg" style="top:41px;height:11.5px;background:#4ab2dc;border-bottom:0"></div>
 <div class="a" style="left:2px;top:45.5px;width:19px;height:1.2px;background:#1e5c86"></div>
 <div class="a" style="left:4.5px;top:52.5px;width:14px;height:15px;background:#121212"></div>
 <div class="skl" style="left:25px;top:41px">Swept Span</div>
 <div class="skl" style="left:25px;top:53.5px">Zero Span</div>
</div>
<div class="a" style="left:651px;top:163.5px;width:109px;height:30px;background:#5a5a57;border:1px solid #3c3c3c;border-radius:5px"></div>
<div class="a" style="left:681px;top:172.5px;font-size:11.5px;color:#f4f4f4">Full Span</div>
<div class="sk" style="top:198px;height:39.5px">
 <div class="skl" style="top:2px">Start Freq</div>
 <div class="skv" style="top:19px">950.000000 MHz</div>
 <div class="ul" style="top:34.5px"></div>
</div>
<div class="sk" style="top:242.5px;height:39.5px">
 <div class="skl" style="top:2px">Stop Freq</div>
 <div class="skv" style="top:18.5px">1.050000000 GHz</div>
 <div class="ul" style="top:34.5px"></div>
</div>
<div class="a" style="left:650.5px;top:287.5px;width:110.5px;height:29.5px;background:#f6f6f6;border:1px solid #a8dcee;border-radius:6px"></div>
<div class="a" style="left:672px;top:295.5px;font-size:11.6px;color:#202020;-webkit-text-stroke:0.1px #202020">AUTO TUNE</div>
<div class="sk" style="top:322.5px;height:71.5px">
 <div class="skl" style="top:0px">CF Step</div>
 <div class="skv" style="top:17.5px">10.000000 MHz</div>
 <div class="ul" style="top:33.5px"></div>
 <div class="tg" style="top:40px;height:11.5px;background:#4ab2dc"></div>
 <div class="a" style="left:2px;top:44.5px;width:19px;height:1.2px;background:#1e5c86"></div>
 <div class="a" style="left:4.5px;top:51.5px;width:14px;height:15px;background:#121212"></div>
 <div class="skl" style="left:25px;top:39.5px">Auto</div>
 <div class="skl" style="left:25px;top:53px">Man</div>
</div>
<div class="sk" style="top:398.5px;height:39.5px">
 <div class="skl" style="top:0px">Freq Offset</div>
 <div class="skv" style="top:17.5px">0 Hz</div>
 <div class="ul" style="top:33.5px"></div>
</div>
<div class="sk" style="top:443px;height:47px">
 <div class="skl" style="top:2px">X Axis Scale</div>
 <div class="a" style="left:5px;top:17px;width:13.5px;height:13px;background:#121212"></div>
 <div class="tg" style="top:31px;height:11.5px;background:#4ab2dc"></div>
 <div class="a" style="left:2px;top:35.5px;width:19px;height:1.2px;background:#1e5c86"></div>
 <div class="skl" style="left:25px;top:17px">Log</div>
 <div class="skl" style="left:25px;top:30.5px">Lin</div>
</div>
<div class="sk" style="top:496px;height:30px">
 <div class="skl" style="top:2.5px">Signal Track</div>
 <div class="skl" style="top:15px;font-size:10.5px">(Span Zoom)</div>
</div>

</body></html>
